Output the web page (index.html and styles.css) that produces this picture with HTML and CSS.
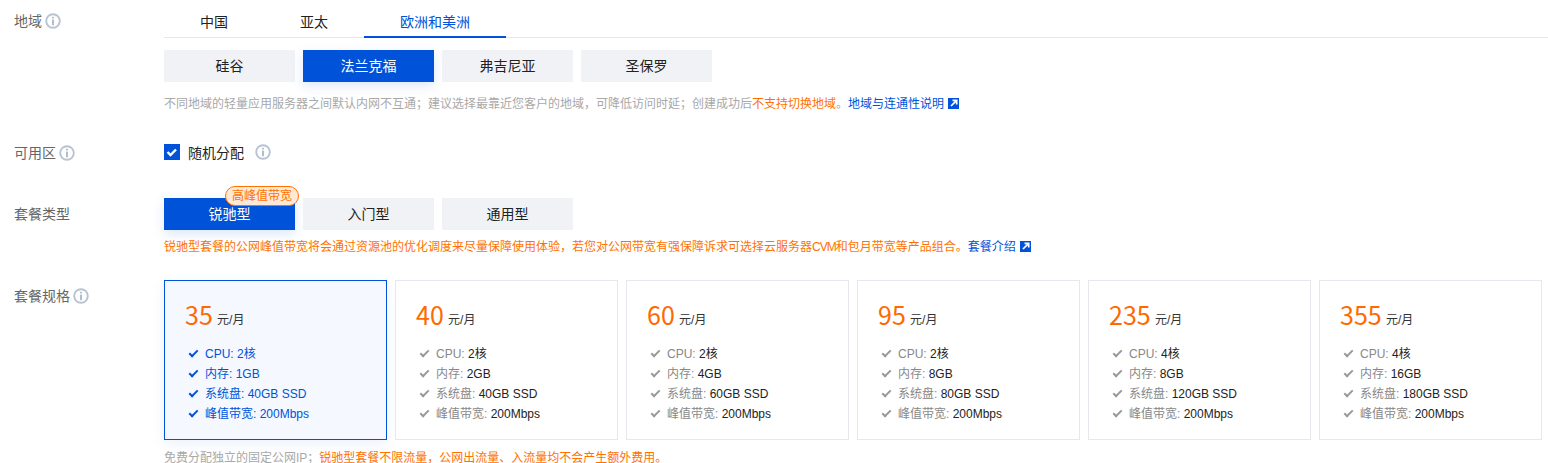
FILE: index.html
```html
<!DOCTYPE html>
<html lang="zh">
<head>
  <meta charset="utf-8">
  <title>轻量应用服务器</title>
  <link rel="stylesheet" href="styles.css">
</head>
<body>
  <!-- Region -->
  <div class="row row-region">
    <div class="label">地域<svg class="info" viewBox="0 0 16 16"><circle cx="8" cy="8" r="6.8"/><rect class="dot" x="7.2" y="3.8" width="1.6" height="1.6"/><rect class="dot" x="7.2" y="6.6" width="1.6" height="5.6"/></svg></div>
    <div class="content">
      <div class="tabs">
        <div class="tab">中国</div>
        <div class="tab">亚太</div>
        <div class="tab active">欧洲和美洲</div>
      </div>
      <div class="btn-group">
        <div class="btn">硅谷</div>
        <div class="btn selected">法兰克福</div>
        <div class="btn">弗吉尼亚</div>
        <div class="btn">圣保罗</div>
      </div>
      <p class="hint hint-region">不同地域的轻量应用服务器之间默认内网不互通；建议选择最靠近您客户的地域，可降低访问时延；创建成功后<span class="warn">不支持切换地域</span>。<a class="link">地域与连通性说明<svg class="ext" viewBox="0 0 11 11"><rect width="11" height="11" fill="#0052d9"/><path d="M4.500 2.300h4.200v4.200M8.200 2.800L3 8" fill="none" stroke="#fff" stroke-width="1.700"/></svg></a></p>
    </div>
  </div>

  <!-- Availability zone -->
  <div class="row row-zone">
    <div class="label">可用区<svg class="info" viewBox="0 0 16 16"><circle cx="8" cy="8" r="6.8"/><rect class="dot" x="7.2" y="3.8" width="1.6" height="1.6"/><rect class="dot" x="7.2" y="6.6" width="1.6" height="5.6"/></svg></div>
    <div class="content zone">
      <span class="checkbox"><svg viewBox="0 0 16 16"><path d="M3.500 8l3 3 5.500-5.500" fill="none" stroke="#fff" stroke-width="2.400"/></svg></span>
      <span class="check-text">随机分配</span>
      <svg class="info info-zone" viewBox="0 0 16 16"><circle cx="8" cy="8" r="6.8"/><rect class="dot" x="7.2" y="3.8" width="1.6" height="1.6"/><rect class="dot" x="7.2" y="6.6" width="1.6" height="5.6"/></svg>
    </div>
  </div>

  <!-- Plan type -->
  <div class="row row-type">
    <div class="label label-btn">套餐类型</div>
    <div class="content">
      <div class="btn-group">
        <div class="btn selected">锐驰型<span class="badge">高峰值带宽</span></div>
        <div class="btn">入门型</div>
        <div class="btn">通用型</div>
      </div>
      <p class="hint hint-type"><span class="warn">锐驰型套餐的公网峰值带宽将会通过资源池的优化调度来尽量保障使用体验，若您对公网带宽有强保障诉求可选择云服务器<span class="latin">CVM</span>和包月带宽等产品组合。</span><a class="link">套餐介绍<svg class="ext" viewBox="0 0 11 11"><rect width="11" height="11" fill="#0052d9"/><path d="M4.500 2.300h4.200v4.200M8.200 2.800L3 8" fill="none" stroke="#fff" stroke-width="1.700"/></svg></a></p>
    </div>
  </div>

  <!-- Plan specs -->
  <div class="row row-spec">
    <div class="label">套餐规格<svg class="info" viewBox="0 0 16 16"><circle cx="8" cy="8" r="6.8"/><rect class="dot" x="7.2" y="3.8" width="1.6" height="1.6"/><rect class="dot" x="7.2" y="6.6" width="1.6" height="5.6"/></svg></div>
    <div class="content">
      <div class="cards">
        <div class="card selected">
          <div class="price"><b>35</b> 元/月</div>
          <ul>
            <li>CPU: <span>2核</span></li>
            <li>内存: <span>1GB</span></li>
            <li>系统盘: <span>40GB SSD</span></li>
            <li>峰值带宽: <span>200Mbps</span></li>
          </ul>
        </div>
        <div class="card">
          <div class="price"><b>40</b> 元/月</div>
          <ul>
            <li>CPU: <span>2核</span></li>
            <li>内存: <span>2GB</span></li>
            <li>系统盘: <span>40GB SSD</span></li>
            <li>峰值带宽: <span>200Mbps</span></li>
          </ul>
        </div>
        <div class="card">
          <div class="price"><b>60</b> 元/月</div>
          <ul>
            <li>CPU: <span>2核</span></li>
            <li>内存: <span>4GB</span></li>
            <li>系统盘: <span>60GB SSD</span></li>
            <li>峰值带宽: <span>200Mbps</span></li>
          </ul>
        </div>
        <div class="card">
          <div class="price"><b>95</b> 元/月</div>
          <ul>
            <li>CPU: <span>2核</span></li>
            <li>内存: <span>8GB</span></li>
            <li>系统盘: <span>80GB SSD</span></li>
            <li>峰值带宽: <span>200Mbps</span></li>
          </ul>
        </div>
        <div class="card">
          <div class="price"><b>235</b> 元/月</div>
          <ul>
            <li>CPU: <span>4核</span></li>
            <li>内存: <span>8GB</span></li>
            <li>系统盘: <span>120GB SSD</span></li>
            <li>峰值带宽: <span>200Mbps</span></li>
          </ul>
        </div>
        <div class="card">
          <div class="price"><b>355</b> 元/月</div>
          <ul>
            <li>CPU: <span>4核</span></li>
            <li>内存: <span>16GB</span></li>
            <li>系统盘: <span>180GB SSD</span></li>
            <li>峰值带宽: <span>200Mbps</span></li>
          </ul>
        </div>
      </div>
      <p class="hint hint-spec">免费分配独立的固定公网IP；<span class="warn">锐驰型套餐不限流量，公网出流量、入流量均不会产生额外费用。</span></p>
    </div>
  </div>
</body>
</html>
```

FILE: styles.css
```css
html, body {
  height: 463px;
  overflow: hidden;
}
body {
  margin: 0;
  background: #fff;
  color: #222;
  font-family: "Liberation Sans", "Noto Sans CJK SC", sans-serif;
  font-size: 12px;
}
.row {
  display: flex;
}
.label {
  width: 164px;
  flex: none;
  padding-left: 14px;
  box-sizing: border-box;
  font-size: 14px;
  line-height: 20px;
  color: #666;
  display: flex;
  align-items: center;
  align-self: flex-start;
}
.content {
  flex: 1;
  min-width: 0;
}
.info {
  width: 16px;
  height: 16px;
  margin-left: 3px;
  flex: none;
}
.info circle {
  fill: none;
  stroke: #b8c3d4;
  stroke-width: 1.900;
}
.info .dot {
  fill: #9fadc2;
}

/* Region row */
.row-region {
  height: 144px;
}
.row-region .label {
  margin-top: 11px;
}
.tabs {
  display: flex;
  height: 38px;
  box-shadow: inset 0 -1px 0 #e5e8ee;
  margin-bottom: 12px;
}
.tab {
  padding: 0 36px;
  font-size: 14px;
  height: 38px;
  line-height: 44px;
  overflow: hidden;
  box-sizing: border-box;
}
.tab.active {
  color: #0052d9;
  border-bottom: 2px solid #0052d9;
}
.btn-group {
  display: flex;
  gap: 8px;
}
.btn {
  position: relative;
  width: 131px;
  height: 32px;
  line-height: 32px;
  text-align: center;
  font-size: 14px;
  background: #f1f2f6;
  color: #222;
}
.btn.selected {
  background: #0052d9;
  color: #fff;
  box-shadow: 0 4px 12px rgba(0, 82, 217, 0.14);
}
.badge {
  position: absolute;
  top: -12px;
  left: 61px;
  width: 74px;
  height: 20px;
  box-sizing: border-box;
  border: 1px solid #ff7200;
  border-radius: 10px;
  background: #ffe8d5;
  color: #ff7200;
  font-size: 12px;
  line-height: 18px;
  white-space: nowrap;
}
.hint {
  margin: 0;
  font-size: 12px;
  line-height: 20px;
  color: #a8a8a8;
  white-space: nowrap;
}
.hint-region {
  margin-top: 12px;
}
.warn {
  color: #ff7200;
}
.latin {
  letter-spacing: -1px;
}
.link {
  color: #0052d9;
}
.ext {
  width: 11px;
  height: 11px;
  margin-left: 4px;
  vertical-align: -1px;
}

/* Zone row */
.row-zone {
  height: 54px;
}
.row-zone .label {
  margin-top: -1px;
}
.zone {
  display: flex;
  align-items: center;
  height: 16px;
}
.checkbox {
  width: 16px;
  height: 16px;
  background: #0052d9;
  display: block;
}
.checkbox svg {
  display: block;
}
.check-text {
  margin-left: 8px;
  font-size: 14px;
  color: #222;
}
.info-zone {
  margin-left: 11px;
}

/* Type row */
.row-type {
  height: 82px;
}
.label-btn {
  margin-top: 6px;
}
.hint-type {
  margin-top: 7px;
}

/* Spec row */
.row-spec .label {
  margin-top: 6px;
}
.cards {
  display: flex;
  gap: 8px;
}
.card {
  width: 223px;
  height: 160px;
  flex: none;
  box-sizing: border-box;
  border: 1px solid #e5e8ee;
  padding: 18px 20px 0;
}
.card.selected {
  border-color: #0052d9;
  background: #f5f8ff;
  box-shadow: 0 4px 12px rgba(0, 82, 217, 0.08);
}
.price {
  height: 32px;
  line-height: 30px;
  color: #333;
}
.price b {
  font-family: "Noto Sans CJK SC", sans-serif;
  font-weight: 400;
  font-size: 25px;
  color: #ff6a00;
  vertical-align: -1px;
  margin-right: 1px;
}
.card ul {
  list-style: none;
  margin: 13px 0 0;
  padding: 0;
}
.card li {
  position: relative;
  padding-left: 20px;
  line-height: 20px;
  color: #888;
}
.card li span {
  color: #222;
}
.card li::before {
  content: "";
  position: absolute;
  left: 4px;
  top: 6px;
  width: 7px;
  height: 3px;
  border-left: 2px solid #999;
  border-bottom: 2px solid #999;
  transform: rotate(-45deg);
}
.card.selected li,
.card.selected li span {
  color: #0052d9;
}
.card.selected li::before {
  border-color: #0052d9;
}
.hint-spec {
  margin-top: 8px;
}
```
